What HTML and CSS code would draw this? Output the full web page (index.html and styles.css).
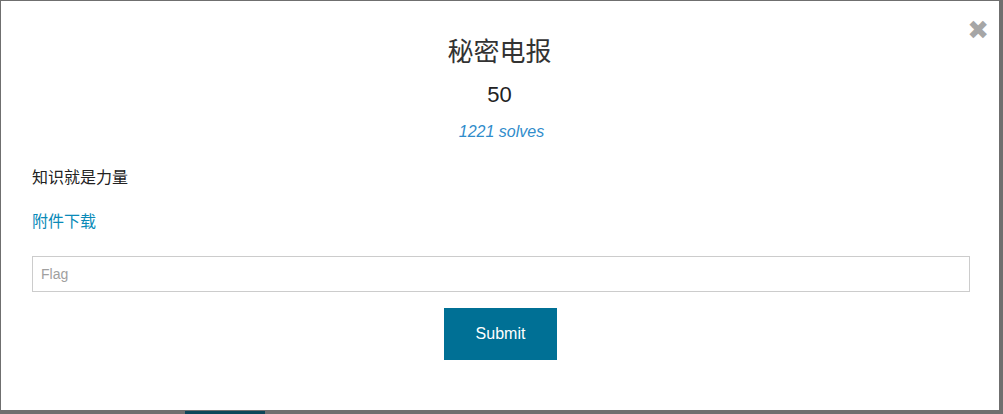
FILE: index.html
```html
<!DOCTYPE html>
<html>
<head>
<meta charset="utf-8">
<link rel="stylesheet" href="styles.css">
</head>
<body>
<div class="modal">
  <span class="close">&#x2716;</span>
  <h2 class="title">秘密电报</h2>
  <div class="score">50</div>
  <div class="solves">1221 solves</div>
  <p class="desc">知识就是力量</p>
  <a class="link" href="#">附件下载</a>
  <input class="flag" type="text" placeholder="Flag">
  <div class="actions"><button class="submit">Submit</button></div>
</div>
<div class="behind"></div>
</body>
</html>
```
FILE: styles.css
```css
html, body {
  margin: 0;
  padding: 0;
  background: #6f6f6f;
  height: 414px;
  overflow: hidden;
  font-family: "Liberation Sans", "Noto Sans CJK SC", sans-serif;
}
.modal {
  position: relative;
  box-sizing: border-box;
  margin: 1px 0 0 1px;
  width: 998px;
  height: 409px;
  background: #fff;
  padding: 36px 32px 0 31px;
  display: flex;
  flex-direction: column;
}
.close {
  position: absolute;
  top: 15px;
  right: 10px;
  font-size: 26px;
  line-height: 28px;
  color: #a6a6a6;
  font-family: "DejaVu Sans", sans-serif;
  font-weight: bold;
}
.title {
  margin: 0;
  text-align: center;
  font-size: 26px;
  line-height: 30px;
  font-weight: normal;
  color: #333;
}
.score {
  margin-top: 13px;
  text-align: center;
  font-size: 22px;
  line-height: 30px;
  color: #222;
}
.solves {
  margin-top: 11px;
  text-align: center;
  padding-left: 4px;
  font-size: 16px;
  line-height: 22px;
  font-style: italic;
  color: #2f8ccb;
}
.desc {
  margin: 24px 0 0;
  font-size: 16px;
  line-height: 22px;
  color: #222;
}
.link {
  margin-top: 22px;
  font-size: 16px;
  line-height: 22px;
  color: #0a8ab8;
  text-decoration: none;
  align-self: flex-start;
}
.flag {
  margin-top: 23px;
  box-sizing: border-box;
  height: 36px;
  width: 938px;
  border: 1px solid #cccccc;
  padding: 0 8px;
  font-family: "Liberation Sans", sans-serif;
  font-size: 14px;
  color: #333;
  outline: none;
}
.flag::placeholder {
  color: #a0a0a0;
}
.actions {
  margin-top: 16px;
  display: flex;
  justify-content: center;
  padding-left: 2px;
}
.submit {
  width: 113px;
  height: 52px;
  border: none;
  background: #007095;
  color: #fff;
  font-family: "Liberation Sans", sans-serif;
  font-size: 16px;
}
.behind {
  margin: 1px 0 0 185px;
  width: 80px;
  height: 10px;
  background: #0b4659;
}
```
